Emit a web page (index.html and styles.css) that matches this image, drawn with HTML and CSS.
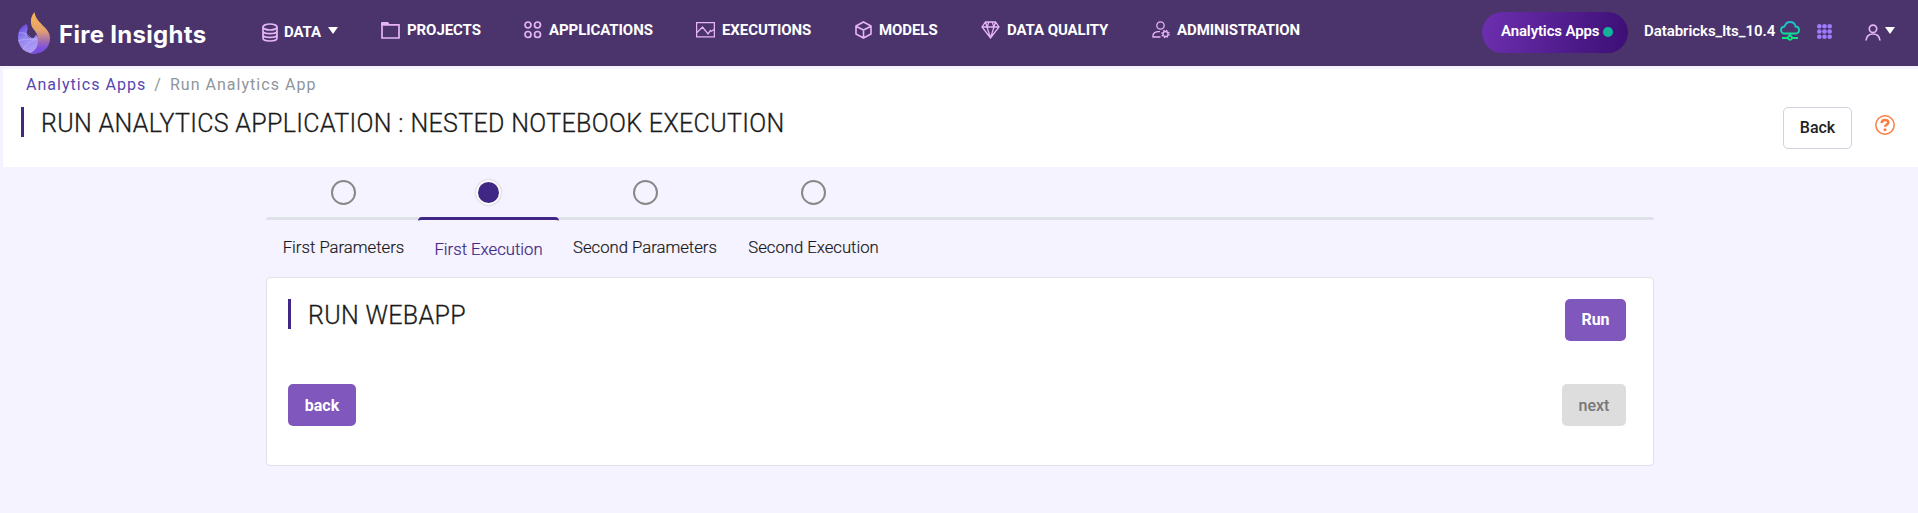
FILE: index.html
```html
<!DOCTYPE html>
<html lang="en">
<head>
<meta charset="utf-8">
<title>Fire Insights</title>
<link rel="stylesheet" href="styles.css">
</head>
<body>
<header class="topbar">
  <a class="brand">
    <svg class="brand-mark" width="34" height="44" viewBox="0 0 34 44">
      <defs>
        <linearGradient id="flame" x1="0" y1="0" x2="0" y2="1"><stop offset="0" stop-color="#fdb64c"/><stop offset=".45" stop-color="#e2a070"/><stop offset=".72" stop-color="#9c68b8"/><stop offset=".88" stop-color="#7a50e0"/></linearGradient>
        <linearGradient id="swirl" x1="0" y1="0" x2=".5" y2="1"><stop offset="0" stop-color="#5a35d8"/><stop offset=".45" stop-color="#9186ee"/><stop offset="1" stop-color="#b29cf6"/></linearGradient>
      </defs>
      <path d="M9.500 13C4 15 1 20 1 26c0 10 7 16.500 16 16.500 5 0 9-5 7-12l-5-7c-1 3-3 4-5 3.500-4-1-5-4-3.500-8.500.5-2 0-4-1-5.500z" fill="url(#swirl)"/>
      <path d="M2 22c5-1 8 1 12 5M1 30c8-3 13-1 18-2M6 39c4-8 9-9 14-11" stroke="#c4b9fa" stroke-width="1" fill="none" opacity=".6"/>
      <path d="M17.500 1c-4 5-4.500 10-2.500 15 3 4 6 7 6 13 0 7-3 11-8 13.300 11 2 20-4.300 20-15.300 0-11-14-14-15.500-26z" fill="url(#flame)"/>
    </svg>
    <span class="brand-name">Fire Insights</span>
  </a>
  <nav class="nav">
    <a class="item data"><svg width="16" height="19" viewBox="0 0 16 19"><g class="line"><ellipse cx="8" cy="4" rx="7" ry="3"/><path d="M1 4v11c0 1.700 3.100 3 7 3s7-1.300 7-3V4M1 7.700c0 1.700 3.100 3 7 3s7-1.300 7-3M1 11.400c0 1.700 3.100 3 7 3s7-1.300 7-3"/></g></svg><span>DATA</span><i class="caret"></i></a>
    <a class="item projects"><svg width="19" height="17" viewBox="0 0 19 17"><path class="line" d="M1 2.800h17V16H1z"/><path class="solid" d="M0 3V1q0-1 1-1h6l2 3z"/></svg><span>PROJECTS</span></a>
    <a class="item applications"><svg width="18" height="18" viewBox="0 0 18 18"><g class="line"><circle cx="4" cy="4" r="3"/><circle cx="13.500" cy="4" r="3"/><circle cx="4" cy="13.500" r="3"/><circle cx="13.500" cy="13.500" r="3"/></g></svg><span>APPLICATIONS</span></a>
    <a class="item executions"><svg width="19" height="16" viewBox="0 0 19 16"><g class="line thin"><path d="M.6.600h17.800v14.300H.6zM1 10.500L6.500 5l5.500 7 2.500-3.500 1 .700L18 7.500"/></g></svg><span>EXECUTIONS</span></a>
    <a class="item models"><svg width="17" height="18" viewBox="0 0 17 18"><path class="line cube" d="M8.500 1L16 5v8l-7.500 4L1 13V5zM1.500 5.500L8.500 9l7-3.500M8.500 9v8"/></svg><span>MODELS</span></a>
    <a class="item quality"><svg width="19" height="18" viewBox="0 0 19 18"><path class="line thin" d="M4.500 1h10L18 6l-8.500 11L1 6zM1 6h17M4.500 1L6 6l3.500 11L13 6l1.500-5M8 1L6 6M11 1l2 5"/></svg><span>DATA QUALITY</span></a>
    <a class="item admin"><svg width="18" height="18" viewBox="0 0 18 18"><g class="line thin"><circle cx="8.500" cy="4.500" r="3.700"/><path d="M8.500 16H1c-.8-4 3-6 7-5.300"/><circle cx="13.500" cy="13" r="2.500"/></g><circle cx="13.500" cy="13" r="3.500" fill="none" stroke="#e0aff0" stroke-width="1.500" stroke-dasharray="1.500 1.250"/></svg><span>ADMINISTRATION</span></a>
  </nav>
  <div class="tools">
    <a class="pill"><span>Analytics Apps</span><i class="dot"></i></a>
    <span class="cluster">Databricks_lts_10.4</span>
    <svg class="cloud" width="20" height="20" viewBox="0 0 20 20"><defs><linearGradient id="cl" x1="0" y1="0" x2="0" y2="1"><stop offset="0" stop-color="#20bdd0"/><stop offset="1" stop-color="#04f07c"/></linearGradient></defs><path fill="none" stroke="url(#cl)" stroke-width="1.800" d="M5 12.500C2.500 12.500 1 11 1 9s1.500-3.300 3.500-3.500C5.500 2.500 7.500 1 10 1c3 0 5 1.800 5.500 4.500C17.500 5.500 19 7 19 9s-1.500 3.500-3.500 3.500zM10 12.500v2M2 17h6M12 17h6M10 14.800a2 2 0 1 0 .01 0z"/></svg>
    <svg class="grid" width="15" height="15" viewBox="0 0 15 15"><g fill="#9f7bff"><circle cx="2.300" cy="2.300" r="2.300"/><circle cx="7.500" cy="2.300" r="2.300"/><circle cx="12.700" cy="2.300" r="2.300"/><circle cx="2.300" cy="7.500" r="2.300"/><circle cx="7.500" cy="7.500" r="2.300"/><circle cx="12.700" cy="7.500" r="2.300"/><circle cx="2.300" cy="12.700" r="2.300"/><circle cx="7.500" cy="12.700" r="2.300"/><circle cx="12.700" cy="12.700" r="2.300"/></g></svg>
    <svg class="user" width="16" height="17" viewBox="0 0 16 17"><g class="line"><circle cx="8" cy="4.800" r="3.700"/><path d="M1 16.500C1.500 12 4 10 8 10s6.500 2 7 6.500"/></g></svg>
    <i class="caret"></i>
  </div>
</header>

<section class="page-head">
  <div class="head-text">
    <div class="crumbs"><a>Analytics Apps</a><span class="sep">/</span><span>Run Analytics App</span></div>
    <h1 class="title">RUN ANALYTICS APPLICATION : NESTED NOTEBOOK EXECUTION</h1>
  </div>
  <button class="btn outline">Back</button>
  <svg class="help" width="20" height="20" viewBox="0 0 20 20"><g fill="none" stroke="#fb7d3f"><circle cx="10" cy="10" r="9.200" stroke-width="1.500"/><path stroke-width="2.600" d="M6.700 8c0-2 1.400-3 3.300-3 2 0 3.300 1 3.300 2.500 0 2.300-3.200 2.200-3.200 4.300"/></g><circle cx="10" cy="14.700" r="1.500" fill="#fb7d3f"/></svg>
</section>

<main class="content">
  <div class="steps">
    <div class="step s1"><i class="ring"></i><span>First Parameters</span></div>
    <div class="step s2 active"><i class="ring"></i><span>First Execution</span></div>
    <div class="step s3"><i class="ring"></i><span>Second Parameters</span></div>
    <div class="step s4"><i class="ring"></i><span>Second Execution</span></div>
    <div class="rest"></div>
  </div>
  <section class="card">
    <div class="row">
      <h2 class="title">RUN WEBAPP</h2>
      <button class="btn primary run">Run</button>
    </div>
    <div class="row">
      <button class="btn primary back">back</button>
      <button class="btn muted">next</button>
    </div>
  </section>
</main>
</body>
</html>
```
FILE: styles.css
```css
* { box-sizing: border-box; }
body { margin: 0; height: 513px; overflow: hidden; background: #f5f3ff; color: #1a1a1a; font-family: Roboto, sans-serif; font-size: 16px; }
svg { display: block; flex: none; }

.topbar { display: flex; height: 66px; background: #4b346c; color: #fff; }
.brand { display: flex; width: 262px; padding: 11px 0 0 17px; }
.brand-name { margin: 9px 0 0 8px; font: 700 24px/30px Inter, sans-serif; letter-spacing: .3px; white-space: nowrap; }
.nav { display: flex; align-items: flex-start; padding-top: 20px; font-size: 15px; font-weight: 700; line-height: 20px; letter-spacing: -.08px; white-space: nowrap; }
.item { display: flex; align-items: center; height: 20px; gap: 7px; }
.line { fill: none; stroke: #e6b5f5; stroke-width: 1.700; }
.thin { stroke-width: 1.300; }
.cube { stroke-width: 1.600; }
.solid { fill: #e6b5f5; }
.caret { width: 0; height: 0; border: 5px solid transparent; border-top: 7px solid #fff; border-bottom: 0; }
.data { width: 119px; margin-top: 2px; gap: 6px; }
.data span { margin-top: -1px; }
.data .caret { margin-left: 1px; margin-top: -3px; }
.projects { width: 143px; }
.applications { width: 172px; }
.executions { width: 159px; }
.models { width: 126px; }
.quality { width: 171px; }
.admin { width: 150px; }

.tools { display: flex; align-items: flex-start; margin-left: auto; width: 436px; font-size: 15px; font-weight: 700; white-space: nowrap; }
.pill { display: flex; align-items: center; width: 146px; height: 41px; margin-top: 12px; padding: 0 15px 2px 19px; border-radius: 21px; background: linear-gradient(100deg, #6d2fb0, #3c0f74); font-weight: 600; letter-spacing: -.13px; justify-content: space-between; }
.pill span { margin-top: -1px; }
.dot { width: 10px; height: 10px; margin-top: 1px; border-radius: 50%; background: #14b39b; }
.cluster { width: 136px; margin: 21px 0 0 16px; line-height: 20px; font-weight: 600; letter-spacing: -.05px; }
.cloud { margin-top: 21px; }
.grid { margin: 24px 0 0 17px; }
.user { margin: 24px 0 0 33px; }
.tools > .caret { margin: 27px 0 0 4px; }

.page-head { display: flex; height: 98px; margin: 3px 0 0 3px; background: #fff; }
.head-text { flex: 1; padding-left: 18px; }
.crumbs { display: flex; margin-left: 5px; padding-top: 4px; font-size: 16px; line-height: 24px; letter-spacing: 1.03px; color: #8f959c; }
.crumbs a { color: #5746b0; }
.sep { margin: 0 8px 0 8px; }
.title { margin: 0; height: 30px; border-left: 3px solid #402785; padding-left: 17px; font-size: 25px; line-height: 33px; font-weight: 300; letter-spacing: .34px; -webkit-text-stroke: .3px; white-space: nowrap; }
.page-head .title { margin-top: 10px; }
.btn { height: 42px; padding: 0; border: 0; border-radius: 5px; font: 500 16px/40px Roboto, sans-serif; text-align: center; }
.outline { width: 69px; margin-top: 38px; border: 1px solid #cfd3de; background: #fff; color: #212121; }
.help { margin: 46px 23px 0 23px; }

.content { width: 1388px; margin-left: 266px; }
.steps { display: flex; height: 110px; padding-top: 13px; }
.step { display: flex; flex-direction: column; align-items: center; white-space: nowrap; font-size: 16.700px; font-weight: 300; line-height: 24px; -webkit-text-stroke: .2px; }
.ring { width: 25px; height: 25px; margin-bottom: 12px; border: 2px solid #888; border-radius: 50%; }
.step span { align-self: stretch; padding-top: 16px; border-top: 3px solid #dee2e6; text-align: center; }
.s1 { width: 152px; }
.s1 .ring { margin-left: 3px; }
.s1 span { padding-left: 3px; border-radius: 2px 0 0 2px; }
.s2 { width: 141px; }
.s3 { width: 172px; }
.s4 { width: 164px; }
.s4 span { padding-left: 1px; }
.rest { flex: 1; margin-top: 37px; height: 3px; background: #dee2e6; border-radius: 0 2px 2px 0; }
.active { color: #402785; }
.active .ring { border: 2px solid #fff; background: #402785; box-shadow: 0 0 2px #aaa; }
.active span { padding-top: 18px; border-top-color: #402785; border-radius: 4px 4px 0 0; }

.card { height: 189px; padding: 21px 27px 0 21px; border: 1px solid #dee2e6; border-radius: 4px; background: #fff; }
.row { display: flex; justify-content: space-between; height: 85px; }
.primary { background: #8057bd; color: #fff; font-weight: 700; }
.run { width: 61px; }
.back { width: 68px; padding-top: 1px; }
.muted { width: 64px; padding-top: 1px; background: #ddd; color: #777; }
```
